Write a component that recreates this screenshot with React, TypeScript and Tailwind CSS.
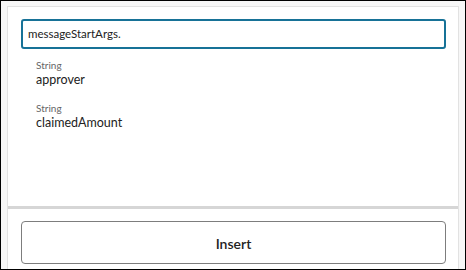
import React from "react";

const fields = [
  { type: "String", name: "approver" },
  { type: "String", name: "claimedAmount" },
];

export default function App() {
  return (
    <div
      className="w-[466px] h-[270px] overflow-hidden border border-black bg-[#f7f7f7] pt-[5px] px-[6px] flex flex-col"
      style={{ fontFamily: 'Lato, "Noto Sans", sans-serif' }}
    >
      <div className="flex-1 flex flex-col bg-white border-t border-x border-[#e2e2e2]">
        {/* Search + results */}
        <div className="h-[199px] pt-[12px] pl-[13px] pr-[12px]">
          <div className="h-[30px] rounded-[3px] border-2 border-[#177297] flex items-center px-[5px]">
            <span className="text-[11.5px] text-[#222]">messageStartArgs.</span>
          </div>
          <div className="pl-[15px] pt-[10px] flex flex-col gap-[13px]">
            {fields.map((f) => (
              <div key={f.name} className="flex flex-col">
                <span className="text-[10px] leading-[12px] text-[#666]">{f.type}</span>
                <span className="text-[12.5px] leading-[18px] text-[#222]">{f.name}</span>
              </div>
            ))}
          </div>
        </div>

        {/* Footer */}
        <div className="border-t-[3px] border-[#d6d6d6] pt-[12px] pl-[13px] pr-[12px]">
          <button
            type="button"
            className="w-full h-[43px] rounded-[4px] border border-[#7d7d7d] bg-white pt-[2px] text-[14px] font-semibold text-[#222]"
          >
            Insert
          </button>
        </div>
      </div>
    </div>
  );
}
